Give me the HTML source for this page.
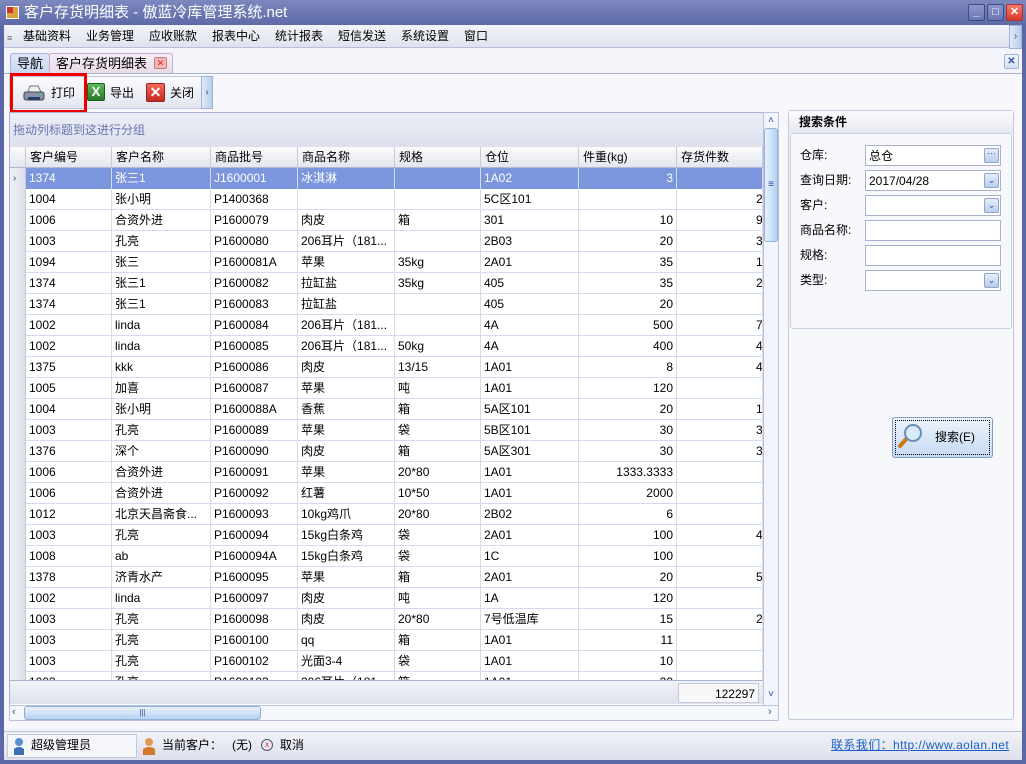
<!DOCTYPE html>
<html><head><meta charset="utf-8">
<style>
*{margin:0;padding:0;box-sizing:border-box}
body{width:1026px;height:764px;overflow:hidden;background:#5b67a6;font-family:"Liberation Sans","Noto Sans CJK SC",sans-serif;font-size:12px;line-height:15px;color:#000;position:relative}
.a{position:absolute}
#title{left:0;top:0;width:1026px;height:25px;background:linear-gradient(#7d88bf,#5e6aa7);color:#fff;font-size:15px;line-height:25px;padding-left:24px}
.wb{top:4px;width:17px;height:17px;border:1px solid #3c4a8a;border-radius:2px;background:linear-gradient(#8e98c8,#6a76b2);color:#fff;font-size:11px;text-align:center;line-height:15px;font-weight:bold}
#client{left:4px;top:25px;width:1018px;height:735px;background:#f4f5fa}
#menu{left:4px;top:25px;width:1005px;height:23px;background:linear-gradient(#f3f4f9,#dfe2ee);border-bottom:1px solid #b9bfd8}
#menu span{position:absolute;top:4px;font-size:12px}
.tab{top:53px;height:20px;border:1px solid #aab3d6;border-bottom:none;border-radius:3px 3px 0 0;font-size:13px;line-height:19px;padding:0 6px}
#content{left:4px;top:73px;width:1018px;height:655px;background:#f8f8fc;border-top:1px solid #aab3d6}
#tb{left:9px;top:76px;width:204px;height:33px;background:linear-gradient(#fafbfd,#e3e6f0);border:1px solid #c2c8de}
#grid{left:9px;top:112px;width:755px;height:594px;background:#fff;border:1px solid #a9b1d2}
.grp{left:10px;top:113px;width:753px;height:34px;background:linear-gradient(#eceef6,#dde0ec);color:#6a74b0;font-size:12px;padding:10px 0 0 3px}
.hd{top:147px;height:21px;background:linear-gradient(#fbfbfd,#e4e6ef);border-right:1px solid #c5c9dc;border-bottom:1px solid #b3b9d4;padding:3px 0 0 4px;font-size:12px;white-space:nowrap;overflow:hidden}
.row{left:10px;width:753px;height:21px;border-bottom:1px solid #d6d9f0}
.c{position:absolute;top:0;height:21px;border-right:1px solid #d6d9f0;padding:3px 0 0 3px;white-space:nowrap;overflow:hidden;line-height:15px}
.sel .c{background:#7b96dc;color:#fff}
.ind{left:0;width:16px;background:linear-gradient(90deg,#eef0f6,#dcdfe9);border-right:1px solid #c0c5da}
.r{text-align:right;padding-right:3px;padding-left:0}
#foot{left:10px;top:680px;width:753px;height:24px;background:linear-gradient(#f2f3f8,#dfe2ec);border-top:1px solid #a9b1d2}
#vs{left:763px;top:112px;width:16px;height:594px;background:#f2f5fb;border:1px solid #b9c3df}
#hs{left:9px;top:705px;width:770px;height:16px;background:#f4f7fc;border:1px solid #b9c3df}
#rp{left:788px;top:110px;width:226px;height:610px;background:#f7f8fb;border:1px solid #c2c8de;border-radius:3px}
.lab{left:800px;font-size:12px}
.inp{left:865px;width:136px;height:21px;background:#fff;border:1px solid #a9b1d2;font-size:12px;padding:3px 0 0 3px}
.dd{position:absolute;right:1px;top:2px;width:15px;height:15px;border:1px solid #8ea3cd;border-radius:2px;background:linear-gradient(#e6eefa,#b9cdec);color:#2d4f9c;font-size:9px;text-align:center;line-height:13px}
#status{left:4px;top:731px;width:1018px;height:29px;background:linear-gradient(#f1f2f8,#dde0ec);border-top:1px solid #b9bfd8}
</style></head><body>
<div class="a" id="title">客户存货明细表 - 傲蓝冷库管理系统.net</div>
<div class="a" style="left:6px;top:6px;width:13px;height:13px;background:#d9a43a;border:1px solid #fff"><div style="width:6px;height:6px;background:#c33"></div></div>
<div class="a wb" style="left:968px">_</div>
<div class="a wb" style="left:987px">□</div>
<div class="a wb" style="left:1006px;background:linear-gradient(#f27b6b,#d9382a);border-color:#a33">✕</div>
<div class="a" id="client"></div>
<div class="a" id="menu">
<span style="left:3px;color:#667;font-size:9px;top:6px">≡</span>
<span style="left:19px">基础资料</span><span style="left:82px">业务管理</span><span style="left:145px">应收账款</span><span style="left:208px">报表中心</span><span style="left:271px">统计报表</span><span style="left:334px">短信发送</span><span style="left:397px">系统设置</span><span style="left:460px">窗口</span>
</div>
<div class="a" style="left:1009px;top:25px;width:13px;height:24px;background:linear-gradient(90deg,#e1eaf8,#b8cdea);border:1px solid #9fb3da;color:#2d4f9c;font-size:10px;text-align:center;line-height:22px">›</div>
<div class="a" id="content"></div>
<div class="a tab" style="left:10px;background:linear-gradient(#dfe8f8,#c8d6f0)">导航</div>
<div class="a tab" style="left:49px;width:124px;background:linear-gradient(#f6eef6,#e8dbe8);border-color:#c7a9c9">客户存货明细表
<span style="position:absolute;left:104px;top:3px;width:13px;height:12px;border:1px solid #c77;border-radius:2px;background:#f3b7b7;color:#d22;font-size:9px;line-height:10px;text-align:center">✕</span></div>
<div class="a" style="left:1004px;top:54px;width:15px;height:15px;border:1px solid #9fb3da;border-radius:2px;background:linear-gradient(#f4f7fd,#d3def2);color:#2d4f9c;font-size:10px;text-align:center;line-height:13px;font-weight:bold">✕</div>
<div class="a" id="tb"></div>
<div class="a" style="left:201px;top:76px;width:12px;height:33px;background:linear-gradient(90deg,#e1eaf8,#b8cdea);border:1px solid #9fb3da;color:#2d4f9c;font-size:10px;text-align:center;line-height:31px">›</div>
<div class="a" style="left:10px;top:73px;width:77px;height:40px;border:3px solid #ee0000"></div>
<svg class="a" style="left:22px;top:84px" width="24" height="20"><path d="M8 2h8l3 6H6z" fill="#eee" stroke="#778"/><rect x="2" y="8" width="20" height="8" rx="2" fill="#8a93a5" stroke="#445"/><rect x="6" y="13" width="12" height="3" fill="#2a3c6c"/><circle cx="18" cy="11" r="1" fill="#3c6"/></svg>
<span class="a" style="left:51px;top:86px">打印</span>
<div class="a" style="left:87px;top:83px;width:18px;height:18px;background:linear-gradient(#5cb85c,#2c7a2c);border:1px solid #1c5e1c;border-radius:2px;color:#fff;font-weight:bold;text-align:center;line-height:16px;font-size:13px">X</div>
<span class="a" style="left:110px;top:86px">导出</span>
<div class="a" style="left:146px;top:83px;width:19px;height:19px;background:linear-gradient(#f46a5a,#c42a1e);border:1px solid #922;border-radius:2px;color:#fff;font-weight:bold;text-align:center;line-height:17px;font-size:14px">✕</div>
<span class="a" style="left:170px;top:86px">关闭</span>

<div class="a" id="grid"></div>
<div class="a grp">拖动列标题到这进行分组</div>
<div class="a hd" style="left:10px;width:16px"></div>
<div class="a hd" style="left:26px;width:86px">客户编号</div>
<div class="a hd" style="left:112px;width:99px">客户名称</div>
<div class="a hd" style="left:211px;width:87px">商品批号</div>
<div class="a hd" style="left:298px;width:97px">商品名称</div>
<div class="a hd" style="left:395px;width:86px">规格</div>
<div class="a hd" style="left:481px;width:98px">仓位</div>
<div class="a hd" style="left:579px;width:98px">件重(kg)</div>
<div class="a hd" style="left:677px;width:86px">存货件数</div>
<div class="a" style="left:10px;top:168px;width:753px;height:512px;overflow:hidden">
<div id="rows"></div>
</div>
<script>
var d=[["1374","张三1","J1600001","冰淇淋","","1A02","3",""],
["1004","张小明","P1400368","","","5C区101","","2"],
["1006","合资外进","P1600079","肉皮","箱","301","10","9"],
["1003","孔亮","P1600080","206耳片（181...","","2B03","20","3"],
["1094","张三","P1600081A","苹果","35kg","2A01","35","1"],
["1374","张三1","P1600082","拉缸盐","35kg","405","35","2"],
["1374","张三1","P1600083","拉缸盐","","405","20",""],
["1002","linda","P1600084","206耳片（181...","","4A","500","7"],
["1002","linda","P1600085","206耳片（181...","50kg","4A","400","49"],
["1375","kkk","P1600086","肉皮","13/15","1A01","8","4"],
["1005","加喜","P1600087","苹果","吨","1A01","120",""],
["1004","张小明","P1600088A","香蕉","箱","5A区101","20","1"],
["1003","孔亮","P1600089","苹果","袋","5B区101","30","3"],
["1376","深个","P1600090","肉皮","箱","5A区301","30","3"],
["1006","合资外进","P1600091","苹果","20*80","1A01","1333.3333",""],
["1006","合资外进","P1600092","红薯","10*50","1A01","2000",""],
["1012","北京天昌斋食...","P1600093","10kg鸡爪","20*80","2B02","6",""],
["1003","孔亮","P1600094","15kg白条鸡","袋","2A01","100","4"],
["1008","ab","P1600094A","15kg白条鸡","袋","1C","100",""],
["1378","济青水产","P1600095","苹果","箱","2A01","20","5"],
["1002","linda","P1600097","肉皮","吨","1A","120",""],
["1003","孔亮","P1600098","肉皮","20*80","7号低温库","15","2"],
["1003","孔亮","P1600100","qq","箱","1A01","11",""],
["1003","孔亮","P1600102","光面3-4","袋","1A01","10",""],
["1003","孔亮","P1600103","206耳片（181...","箱","1A01","20",""]];
var L=[16,102,201,288,385,471,569,667],W=[86,99,87,97,86,98,98,86],h="";
d.forEach(function(r,i){h+='<div class="a row'+(i==0?' sel':'')+'" style="left:0;top:'+(i*21)+'px"><div class="c ind" style="'+(i==0?'background:linear-gradient(90deg,#eef0f6,#dcdfe9);color:#2d4f9c;font-size:10px':'')+'">'+(i==0?'›':'')+'</div>';
r.forEach(function(v,j){var rr=j>=6;h+='<div class="c'+(rr?' r':'')+'" style="left:'+L[j]+'px;width:'+W[j]+'px'+(j==7?';padding-right:0;direction:rtl;':'')+'">'+(j==7&&v?'<span style="position:relative;margin-left:-4px;display:inline-block;width:6px;overflow:hidden;direction:ltr;text-align:left">'+v+'</span>':v)+'</div>'});h+='</div>'});
document.getElementById('rows').innerHTML=h;
</script>
<div class="a" id="foot"><div style="position:absolute;left:668px;top:2px;width:81px;height:20px;border:1px solid #c5c9dc;background:#f8f8fb;text-align:right;padding:3px 3px 0 0">122297</div></div>
<div class="a" id="vs"><div style="position:absolute;left:0;top:15px;width:14px;height:114px;border:1px solid #8fb1dc;border-radius:3px;background:linear-gradient(90deg,#e9f2fc,#b6d2f1);color:#2d4f9c;font-size:10px;text-align:center;padding-top:48px">≡</div><div style="position:absolute;top:0;width:14px;text-align:center;color:#2d4f9c;font-size:10px">˄</div><div style="position:absolute;top:574px;width:14px;text-align:center;color:#2d4f9c;font-size:10px">˅</div></div>
<div class="a" id="hs"><div style="position:absolute;left:14px;top:0;width:237px;height:14px;border:1px solid #8fb1dc;border-radius:3px;background:linear-gradient(#e9f2fc,#b6d2f1);color:#2d4f9c;font-size:8px;text-align:center;line-height:12px">|||</div><span style="position:absolute;left:2px;top:-1px;color:#2d4f9c;font-size:11px">‹</span><span style="position:absolute;left:758px;top:-1px;color:#2d4f9c;font-size:11px">›</span></div>

<div class="a" id="rp"></div>
<div class="a" style="left:789px;top:111px;width:224px;height:22px;background:linear-gradient(#fafbfd,#e6e8f0);font-weight:bold;padding:4px 0 0 10px">搜索条件</div>
<div class="a" style="left:790px;top:133px;width:222px;height:196px;border:1px solid #c8cde0;border-radius:3px"></div>
<span class="a lab" style="top:148px">仓库:</span>
<div class="a inp" style="top:145px">总仓<div class="dd" style="line-height:8px">···</div></div>
<span class="a lab" style="top:173px">查询日期:</span>
<div class="a inp" style="top:170px">2017/04/28<div class="dd">⌄</div></div>
<span class="a lab" style="top:198px">客户:</span>
<div class="a inp" style="top:195px"><div class="dd">⌄</div></div>
<span class="a lab" style="top:223px">商品名称:</span>
<div class="a inp" style="top:220px"></div>
<span class="a lab" style="top:248px">规格:</span>
<div class="a inp" style="top:245px"></div>
<span class="a lab" style="top:273px">类型:</span>
<div class="a inp" style="top:270px"><div class="dd">⌄</div></div>
<div class="a" style="left:892px;top:417px;width:101px;height:41px;border:1px solid #7f9cc9;border-radius:3px;background:linear-gradient(#eef4fc,#c5daf2)">
<div style="position:absolute;left:2px;top:2px;right:2px;bottom:2px;border:1px dotted #000"></div>
<svg style="position:absolute;left:3px;top:4px" width="28" height="28"><line x1="4" y1="24" x2="11" y2="16" stroke="#c77a1a" stroke-width="4" stroke-linecap="round"/><circle cx="17" cy="11" r="8" fill="#d7ecf8" stroke="#6a8fb5" stroke-width="2"/></svg>
<span style="position:absolute;left:42px;top:12px">搜索(E)</span></div>

<div class="a" id="status"></div>
<div class="a" style="left:7px;top:734px;width:130px;height:24px;border:1px solid #c2c8de;background:#f5f6fa"></div>
<svg class="a" style="left:12px;top:737px" width="14" height="18"><circle cx="7" cy="5" r="4" fill="#5c8fd0"/><path d="M2 18v-6q5-4 10 0v6z" fill="#3d6fb5"/></svg>
<span class="a" style="left:31px;top:738px">超级管理员</span>
<svg class="a" style="left:142px;top:737px" width="14" height="18"><circle cx="7" cy="5" r="4" fill="#e39a4f"/><path d="M1 18v-6q6-4 12 0v6z" fill="#d07a2a"/></svg>
<span class="a" style="left:162px;top:738px">当前客户：</span>
<span class="a" style="left:232px;top:738px">(无)</span>
<div class="a" style="left:261px;top:739px;width:12px;height:12px;border:1px solid #556;border-radius:50%;color:#d22;font-size:8px;text-align:center;line-height:10px">x</div>
<span class="a" style="left:280px;top:738px">取消</span>
<span class="a" style="left:831px;top:738px;color:#1a5fc8;text-decoration:underline;letter-spacing:0.4px">联系我们：http://www.aolan.net</span>
</body></html>
